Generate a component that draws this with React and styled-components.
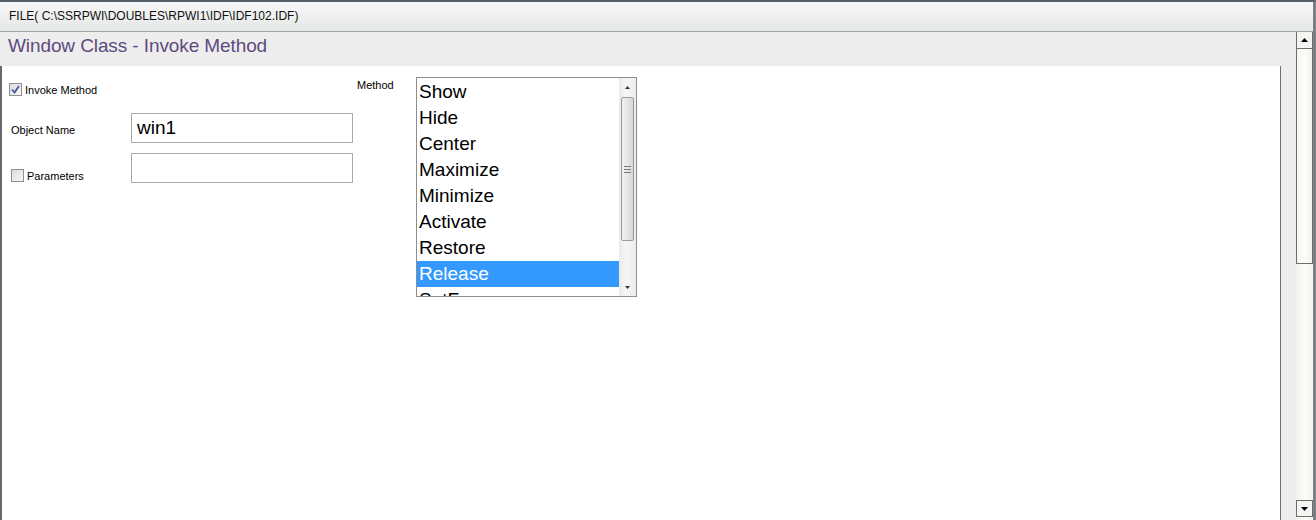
import React from "react";
import styled, { createGlobalStyle } from "styled-components";

const GlobalStyle = createGlobalStyle`
  html, body { margin: 0; padding: 0; background: #ffffff; }
  body { font-family: "Liberation Sans", Arial, sans-serif; overflow: hidden; }
  * { box-sizing: border-box; }
`;

const Frame = styled.div`
  width: 1316px;
  height: 520px;
  display: flex;
  flex-direction: row;
  border-top: 2px solid #58616a;
  overflow: hidden;
  background: #ececec;
`;

const MainColumn = styled.div`
  flex: 1;
  display: flex;
  flex-direction: column;
  min-width: 0;
`;

const RightEdge = styled.div`
  width: 3px;
  background: linear-gradient(to right, #8a8d90, #6d7175 60%, #9a9ea2);
`;

const FileBar = styled.div`
  height: 30px;
  flex: none;
  display: flex;
  align-items: center;
  padding: 0 0 1px 9px;
  font-size: 12px;
  color: #111;
  background: linear-gradient(#f6f7f6, #e6e8e7);
  border-bottom: 1px solid #a3a5a6;
`;

const Body = styled.div`
  flex: 1;
  display: flex;
  flex-direction: row;
  min-height: 0;
`;

const Pane = styled.div`
  flex: 1;
  display: flex;
  flex-direction: column;
  background: #ededed;
`;

const Header = styled.div`
  height: 34px;
  flex: none;
  display: flex;
  align-items: center;
  padding: 0 0 6px 8px;
  font-size: 19px;
  color: #5d4b80;
  letter-spacing: -0.1px;
`;

const Content = styled.div`
  flex: 1;
  background: #ffffff;
  margin-right: 15px;
  border-left: 2px solid #6a6a6a;
  border-right: 1px solid #6f6f6f;
  padding: 11px 0 0 0;
`;

const Form = styled.div`
  display: flex;
  flex-direction: row;
  align-items: flex-start;
`;

const LeftCol = styled.div`
  width: 351px;
  display: flex;
  flex-direction: column;
`;

const Row = styled.div`
  display: flex;
  flex-direction: row;
  align-items: ${(p) => p.$align || "center"};
  margin-top: ${(p) => p.$top || 0}px;
  padding-left: ${(p) => p.$indent || 0}px;
`;

const Label = styled.span`
  font-size: 11px;
  color: #000;
  width: ${(p) => (p.$width ? `${p.$width}px` : "auto")};
  flex: none;
  padding-top: ${(p) => p.$pt || 0}px;
`;

const CheckWrap = styled.label`
  display: flex;
  align-items: center;
  gap: 3px;
  font-size: 11px;
  width: ${(p) => (p.$width ? `${p.$width}px` : "auto")};
  margin-bottom: ${(p) => p.$mb || 0}px;
  flex: none;
`;

const Box = styled.span`
  width: 13px;
  height: 13px;
  border: 1px solid #8e8f8f;
  background: linear-gradient(135deg, #dcdcdc, #f8f8f8);
  display: inline-flex;
  align-items: center;
  justify-content: center;
  flex: none;
`;

const TextField = styled.div`
  width: 222px;
  height: 30px;
  border: 1px solid #a7a9ab;
  background: #fff;
  display: flex;
  align-items: center;
  padding: 0 0 1px 5px;
  font-size: 19px;
  color: #000;
`;

const MethodLabel = styled.span`
  font-size: 11px;
  width: 63px;
  margin-top: 2px;
  padding-left: 4px;
  flex: none;
`;

const ListBox = styled.div`
  width: 221px;
  height: 220px;
  border: 1px solid #8b8e92;
  display: flex;
  flex-direction: row;
  background: #fff;
`;

const Items = styled.div`
  flex: 1;
  overflow: hidden;
  padding-top: 1px;
`;

const Item = styled.div`
  height: 26px;
  line-height: 26px;
  padding-left: 2px;
  font-size: 19px;
  white-space: nowrap;
  color: ${(p) => (p.$selected ? "#ffffff" : "#000000")};
  background: ${(p) => (p.$selected ? "#3399ff" : "transparent")};
`;

const ListScroll = styled.div`
  width: 17px;
  display: flex;
  flex-direction: column;
  align-items: center;
  background: linear-gradient(to right, #eaeaea, #f6f6f6 40%, #ececec);
`;

const ListArrow = styled.div`
  width: 17px;
  height: ${(p) => p.$h}px;
  display: flex;
  align-items: center;
  justify-content: center;
  flex: none;
`;

const ListThumb = styled.div`
  width: 13px;
  height: 144px;
  border: 1px solid #9b9b9b;
  border-radius: 2px;
  background: linear-gradient(to right, #f2f2f2, #e6e6e6 50%, #d6d6d6);
  display: flex;
  align-items: center;
  justify-content: center;
  flex: none;
`;

const ListTrack = styled.div`
  flex: 1;
`;

const VScroll = styled.div`
  width: 17px;
  display: flex;
  flex-direction: column;
  background: linear-gradient(to right, #f1f1ee, #fbfbf8 50%, #f3f3ef);
`;

const ScrollButton = styled.div`
  height: 17px;
  flex: none;
  display: flex;
  align-items: center;
  justify-content: center;
  background: #f4f4f2;
  border: 1px solid #6d6d6d;
  border-top: ${(p) => (p.$down ? "1px solid #6d6d6d" : "none")};
  margin-bottom: ${(p) => (p.$down ? 3 : 0)}px;
`;

const ScrollThumb = styled.div`
  height: 215px;
  flex: none;
  border: 1px solid #6d6d6d;
  border-top: none;
  background: linear-gradient(to right, #f6f6f3, #fdfdfb 50%, #f1f1ed);
`;

const ScrollTrack = styled.div`
  flex: 1;
`;

const Triangle = ({ down, color = "#000", w = 7, h = 4 }) => (
  <svg width={w} height={h} viewBox={`0 0 ${w} ${h}`}>
    {down ? (
      <polygon points={`0,0 ${w},0 ${w / 2},${h}`} fill={color} />
    ) : (
      <polygon points={`0,${h} ${w},${h} ${w / 2},0`} fill={color} />
    )}
  </svg>
);

const Grip = () => (
  <svg width="7" height="7" viewBox="0 0 7 7">
    <rect x="0" y="0" width="7" height="1" fill="#7a7a7a" />
    <rect x="0" y="3" width="7" height="1" fill="#7a7a7a" />
    <rect x="0" y="6" width="7" height="1" fill="#7a7a7a" />
  </svg>
);

const CheckBox = ({ checked }) => (
  <Box>
    {checked && (
      <svg width="9" height="9" viewBox="0 0 9 9">
        <path d="M1 4.5 L3.5 7.5 L8 1" stroke="#3f5a94" strokeWidth="1.8" fill="none" />
      </svg>
    )}
  </Box>
);

const methods = [
  "Show",
  "Hide",
  "Center",
  "Maximize",
  "Minimize",
  "Activate",
  "Restore",
  "Release",
  "SetFocus",
];

export default function App() {
  return (
    <>
      <GlobalStyle />
      <Frame>
        <MainColumn>
          <FileBar>FILE( C:\SSRPWI\DOUBLES\RPWI1\IDF\IDF102.IDF)</FileBar>
          <Body>
            <Pane>
              <Header>Window Class - Invoke Method</Header>
              <Content>
                <Form>
                  <LeftCol>
                    <Row $top={6} $indent={7}>
                      <CheckWrap>
                        <CheckBox checked />
                        Invoke Method
                      </CheckWrap>
                    </Row>
                    <Row $top={17} $indent={9}>
                      <Label $width={120} $pt={4}>Object Name</Label>
                      <TextField>win1</TextField>
                    </Row>
                    <Row $top={10} $indent={9} $align="flex-end">
                      <CheckWrap $width={120} $mb={1}>
                        <CheckBox />
                        Parameters
                      </CheckWrap>
                      <TextField />
                    </Row>
                  </LeftCol>
                  <MethodLabel>Method</MethodLabel>
                  <ListBox>
                    <Items>
                      {methods.map((m) => (
                        <Item key={m} $selected={m === "Release"}>
                          {m}
                        </Item>
                      ))}
                    </Items>
                    <ListScroll>
                      <ListArrow $h={19}>
                        <Triangle w={5} h={3} color="#333" />
                      </ListArrow>
                      <ListThumb>
                        <Grip />
                      </ListThumb>
                      <ListTrack />
                      <ListArrow $h={17}>
                        <Triangle down w={5} h={3} color="#333" />
                      </ListArrow>
                    </ListScroll>
                  </ListBox>
                </Form>
              </Content>
            </Pane>
            <VScroll>
              <ScrollButton>
                <Triangle w={7} h={4} />
              </ScrollButton>
              <ScrollThumb />
              <ScrollTrack />
              <ScrollButton $down>
                <Triangle down w={7} h={4} />
              </ScrollButton>
            </VScroll>
          </Body>
        </MainColumn>
        <RightEdge />
      </Frame>
    </>
  );
}
